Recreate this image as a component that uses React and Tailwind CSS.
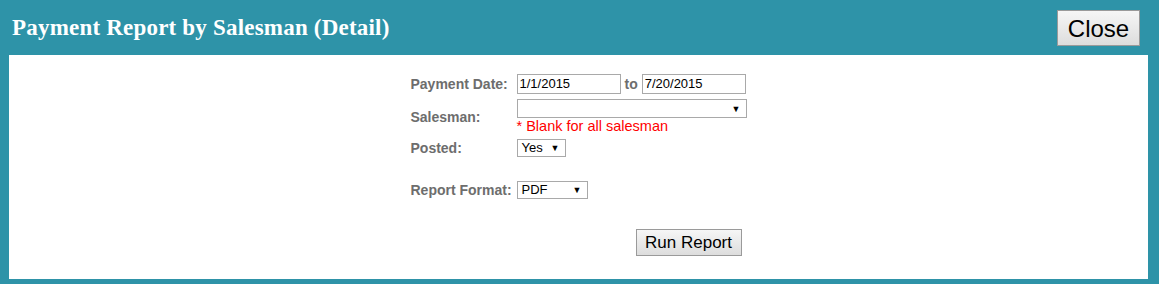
import React from "react";

function Field({ width, height = "h-[20px]", children, arrow = false }) {
  return (
    <div
      className={`flex items-center justify-between ${height} border border-[#a9a9a9] bg-white pl-[2px] text-[13px] leading-[16px] text-black ${width}`}
    >
      <span className={arrow ? "pl-[2px]" : ""}>{children}</span>
      {arrow && <span className="text-[9px] pr-[5px]">▼</span>}
    </div>
  );
}

function Label({ children }) {
  return (
    <div className="text-[14px] leading-[16px] font-bold text-[#6d6d6d] w-[106px] whitespace-nowrap">
      {children}
    </div>
  );
}

export default function App() {
  return (
    <div
      className="w-[1159px] h-[284px] bg-[#2e93a8] flex flex-col"
      style={{ fontFamily: "Arial, 'Liberation Sans', sans-serif" }}
    >
      <div className="flex items-start justify-between h-[55px] pl-[12px] pr-[19px]">
        <h1
          className="text-white font-bold text-[23px] leading-[26px] mt-[15px] tracking-[0.2px]"
          style={{ fontFamily: "'Palatino Linotype', 'Liberation Serif', serif" }}
        >
          Payment Report by Salesman (Detail)
        </h1>
        <button className="mt-[10px] h-[36px] w-[83px] border border-[#9a9a9a] bg-gradient-to-b from-[#f6f6f6] to-[#dddddd] text-[24px] text-black">
          Close
        </button>
      </div>
      <div className="ml-[9px] mr-[11px] h-[224px] bg-white flex justify-center">
        <div className="w-[336px] pt-[19px]">
          <div className="flex items-center">
            <Label>Payment Date:</Label>
            <Field width="w-[104px]">1/1/2015</Field>
            <span className="mx-[4px] text-[14px] leading-[16px] font-bold text-[#6d6d6d]">to</span>
            <Field width="w-[104px]">7/20/2015</Field>
          </div>
          <div className="flex items-center mt-[5px]">
            <Label>Salesman:</Label>
            <div>
              <Field width="w-[230px]" height="h-[19px]" arrow />
              <div className="text-[14.5px] text-[#ff0000] leading-[16px]">* Blank for all salesman</div>
            </div>
          </div>
          <div className="flex items-center mt-[5px]">
            <Label>Posted:</Label>
            <Field width="w-[49px]" height="h-[18px]" arrow>Yes</Field>
          </div>
          <div className="flex items-center mt-[24px]">
            <Label>Report Format:</Label>
            <Field width="w-[71px]" height="h-[18px]" arrow>PDF</Field>
          </div>
          <div className="pl-[225px] mt-[30px]">
            <button className="h-[27px] w-[106px] border border-[#9a9a9a] bg-gradient-to-b from-[#f6f6f6] to-[#dddddd] text-[17px] text-black">
              Run Report
            </button>
          </div>
        </div>
      </div>
    </div>
  );
}
